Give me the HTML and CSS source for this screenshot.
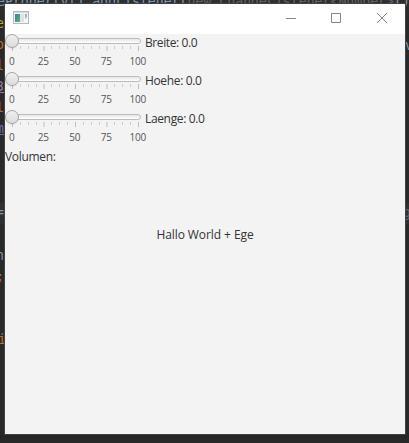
FILE: index.html
```
<!DOCTYPE html>
<html lang="de">
<head>
<meta charset="utf-8">
<title>Volumen</title>
<link rel="stylesheet" href="styles.css">
</head>
<body>
<div class="editor" aria-hidden="true">
  <div class="active-line"></div>
  <pre class="code top"><span class="blue">eProperty().addListener(</span><span class="dim">new ChangeListener&lt;Number&gt;</span><span class="blue">(),</span></pre>
  <pre class="code l1 yellow">e</pre>
  <pre class="code l2 orange">o</pre>
  <pre class="code l3 orange">l</pre>
  <pre class="code l4 purple">3</pre>
  <pre class="code l5 orange">l</pre>
  <pre class="code l6 violet">m</pre>
  <pre class="code l7 blue">=</pre>
  <pre class="code l8 blue">n</pre>
  <pre class="code l9 orange">;</pre>
  <pre class="code l10 orange">i</pre>
  <pre class="code r1 blue">v</pre>
  <pre class="code r2 dim">g</pre>
</div>
<main class="window">
  <header class="titlebar">
    <svg class="app-icon" width="16" height="14" viewBox="0 0 16 14">
      <defs><linearGradient id="g" x1="0" y1="0" x2="1" y2="1"><stop offset="0" stop-color="#4878b0"/><stop offset=".5" stop-color="#479a91"/><stop offset="1" stop-color="#65b866"/></linearGradient></defs>
      <rect x=".5" y=".5" width="15" height="12" fill="#f5f5f5" stroke="#b5b9bd"/>
      <path d="M1 1.500h14" stroke="#d5d9dd"/>
      <rect x="2" y="3" width="5" height="8" fill="url(#g)"/>
      <rect x="7" y="3" width="4" height="8" fill="#dfe2e4"/>
      <path d="M12 3h2v3l-2 2z" fill="url(#g)" opacity=".6"/>
    </svg>
    <svg class="controls" width="104" height="12" viewBox="0 0 104 12" fill="none" stroke="#858585">
      <path d="M1 6.500h10M46.500 1.500h9v9h-9zM92 1l10 10M102 1l-10 10"/>
    </svg>
  </header>
  <section class="row">
    <div class="slider"><div class="track"><i class="thumb"></i></div>
      <svg class="ticks" width="136" height="7"><use href="#ticks"/></svg>
      <div class="labels"><span>0</span><span>25</span><span>50</span><span>75</span><span>100</span></div></div>
    <span class="text breite">Breite: 0.0</span>
  </section>
  <section class="row">
    <div class="slider"><div class="track"><i class="thumb"></i></div>
      <svg class="ticks" width="136" height="7"><use href="#ticks"/></svg>
      <div class="labels"><span>0</span><span>25</span><span>50</span><span>75</span><span>100</span></div></div>
    <span class="text hoehe">Hoehe: 0.0</span>
  </section>
  <section class="row">
    <div class="slider"><div class="track"><i class="thumb"></i></div>
      <svg class="ticks" width="136" height="7"><use href="#ticks"/></svg>
      <div class="labels"><span>0</span><span>25</span><span>50</span><span>75</span><span>100</span></div></div>
    <span class="text laenge">Laenge: 0.0</span>
  </section>
  <div class="text volume">Volumen:</div>
  <div class="text hello"><span>Hallo World + Ege</span></div>
</main>
<svg class="defs" width="0" height="0"><defs><g id="ticks" fill="none">
  <path d="M7.500 1v5M70.500 1v5M133.500 1v5" stroke="#bdbdbd"/>
  <path d="M39 1v5M102 1v5" stroke="#d8d8d8" stroke-width="2"/>
  <path d="M15.500 1v3M23.500 1v3M31.500 1v3M46.500 1v3M54.500 1v3M62.500 1v3M78.500 1v3M86.500 1v3M94.500 1v3M109.500 1v3M117.500 1v3M125.500 1v3" stroke="#cdcdcd"/>
</g></defs></svg>
</body>
</html>
```
FILE: styles.css
```
* { box-sizing: border-box; }
body {
  margin: 0;
  width: 409px;
  height: 443px;
  overflow: hidden;
  position: relative;
  padding: 4px 4px 9px 5px;
  background: #2b2b2b;
}
.editor { position: absolute; inset: 0; overflow: hidden; background: linear-gradient(#303030, #292929 20px, #292929 430px, #252525 436px, #2b2b2b); }
.active-line { position: absolute; top: 203px; left: 0; right: 0; height: 21px; background: #303030; }
.code { position: absolute; margin: 0; left: -4px; font: 13.2px/16px "DejaVu Sans Mono", monospace; }
.top { top: -6px; left: -3px; }
.l1 { top: 16px; left: -4px; }
.l2 { top: 37px; }
.l3 { top: 58px; }
.l4 { top: 79px; text-decoration: underline; }
.l5 { top: 100px; }
.l6 { top: 121px; text-decoration: underline; }
.l7 { top: 205px; }
.l8 { top: 248px; }
.l9 { top: 269px; }
.l10 { top: 332px; left: -2px; }
.r1 { top: 38px; left: 405px; }
.r2 { top: 205px; left: 403px; }
.blue { color: #7c98b4; }
.dim { color: #626568; }
.yellow { color: #aaa62b; }
.orange { color: #bd702c; }
.purple { color: #9876aa; }
.violet { color: #6770c4; }

.window {
  position: relative;
  display: flex;
  flex-direction: column;
  width: 400px;
  height: 430px;
  background: #f3f3f3;
  box-shadow: 0 0 0 1px #404243;
}
.titlebar { display: flex; justify-content: space-between; height: 30px; flex: none; padding: 7px 0 0 8px; background: #fff; }
.controls { margin: 1px 16px 0 0; }
.row { display: flex; height: 38px; gap: 4px; flex: none; }
.slider { width: 136px; flex: none; }
.track {
  position: relative;
  width: 134px;
  height: 6px;
  margin: 4px 0 0 2px;
  border: 1px solid #bcbcbc;
  border-radius: 3px;
  background: linear-gradient(#e6e6e6, #fff);
}
.thumb {
  position: absolute;
  left: -3px;
  top: -5px;
  width: 14px;
  height: 14px;
  border: 1px solid #a5a5a5;
  border-radius: 50%;
  background: linear-gradient(#f0f0f0, #dcdcdc);
  box-shadow: 0 1px 1px #0001;
}
.ticks { display: block; margin-top: 1px; }
.labels { display: grid; grid-template-columns: repeat(5, 31.5px); width: 158px; margin: 2px 0 0 -9px; text-align: center; font: 10px/15px "Open Sans", sans-serif; letter-spacing: -.2px; color: #555; }
.text { font: 12px/17px "Open Sans", sans-serif; color: #333; white-space: nowrap; }
.breite { letter-spacing: -.4px; }
.hoehe { letter-spacing: -.35px; }
.laenge { letter-spacing: -.35px; }
.volume { letter-spacing: -.3px; }
.hello { display: flex; flex: 1; justify-content: center; padding-top: 61px; letter-spacing: -.08px; }
.defs { position: absolute; }
```
